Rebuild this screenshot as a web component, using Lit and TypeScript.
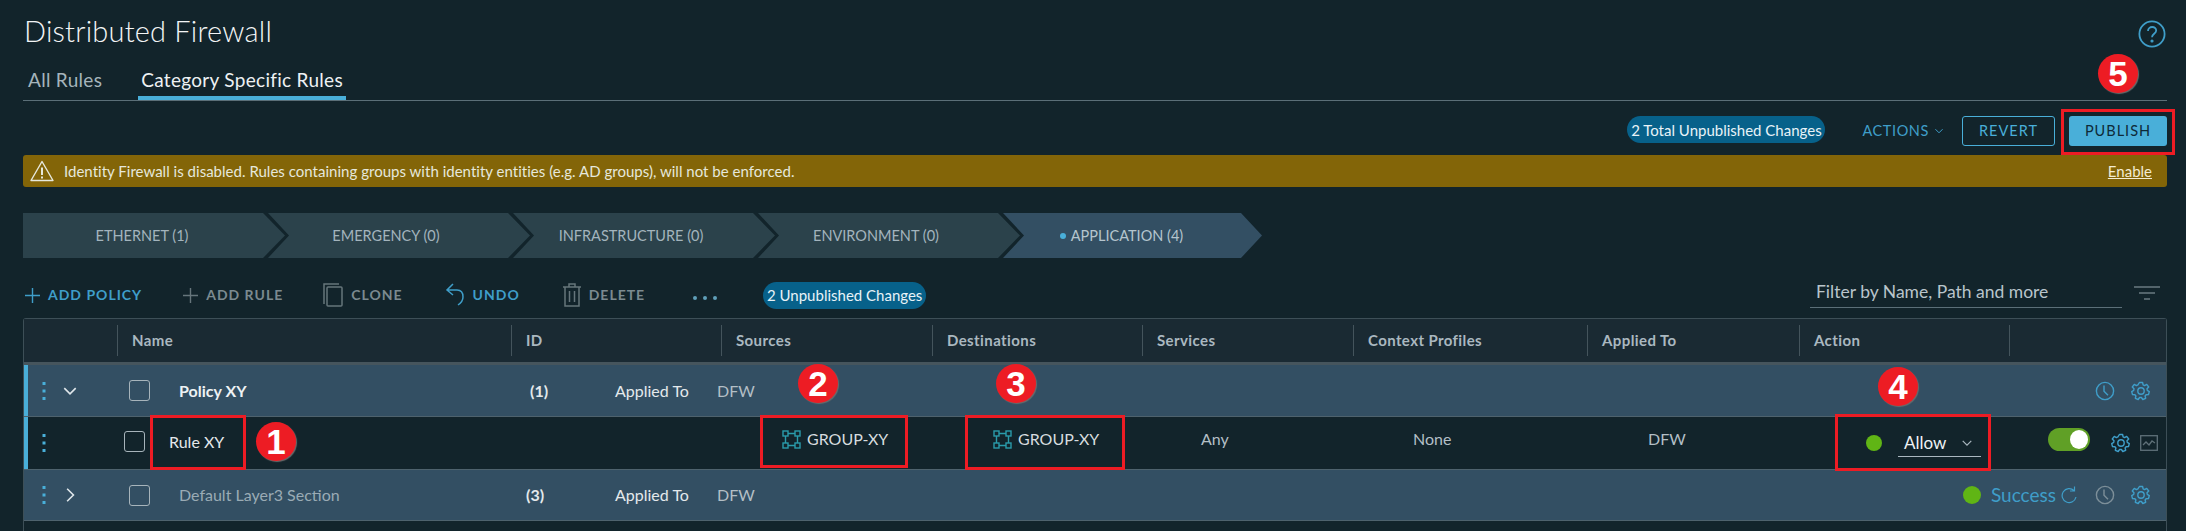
import { LitElement, css, html } from 'lit';
import { customElement } from 'lit/decorators.js';

const BLUE = '#49afd9';

const gear = (color = '#3f9ec9') => html`<svg class="ico" width="20" height="20" viewBox="0 0 20 20" fill="none" stroke=${color} stroke-width="1.4">
  <path d="M8.4 1.5h3.2l.5 2.4 1.5.7 2.1-1.2 2 2.6-1.7 1.8.3 1.6 2 1.2-.8 3-2.4.1-1 1.3.6 2.3-2.9 1.2-1.4-2h-1.8l-1.4 2-2.9-1.2.6-2.3-1-1.3-2.4-.1-.8-3 2-1.2.3-1.6L1.3 6l2-2.6 2.1 1.2 1.5-.7z" stroke-linejoin="round"/>
  <circle cx="10" cy="10" r="3.2"/>
</svg>`;

const clock = (color = '#3f9ec9') => html`<svg class="ico" width="20" height="20" viewBox="0 0 20 20" fill="none" stroke=${color} stroke-width="1.4">
  <circle cx="10" cy="10" r="8.6"/><path d="M9 4.5v5.8l4 4"/>
</svg>`;

const dots = html`<svg class="ico" width="4" height="20" viewBox="0 0 4 20" fill=${BLUE}>
  <rect x="0.5" y="1" width="3" height="3"/><rect x="0.5" y="8.5" width="3" height="3"/><rect x="0.5" y="16" width="3" height="3"/>
</svg>`;

const groupIcon = html`<svg class="ico" width="19" height="19" viewBox="0 0 19 19" fill="none" stroke="#2a9cab" stroke-width="1.4">
  <rect x="1" y="1" width="5" height="5"/><rect x="13" y="1" width="5" height="5"/>
  <rect x="1" y="13" width="5" height="5"/><rect x="13" y="13" width="5" height="5"/>
  <path d="M6 3.5h7M6 15.5h7M3.5 6v7M15.5 6v7"/>
</svg>`;

const chevronDown = (color: string, w = 14) => html`<svg class="ico" width=${w} height=${w} viewBox="0 0 14 14" fill="none" stroke=${color} stroke-width="1.4">
  <path d="M2 4.5l5 5 5-5"/>
</svg>`;

const plus = (color: string) => html`<svg class="ico" width="15" height="15" viewBox="0 0 15 15" stroke=${color} stroke-width="1.4">
  <path d="M7.5 0v15M0 7.5h15"/>
</svg>`;

const segments = [
  { label: 'ETHERNET (1)' },
  { label: 'EMERGENCY (0)' },
  { label: 'INFRASTRUCTURE (0)' },
  { label: 'ENVIRONMENT (0)' },
  { label: 'APPLICATION (4)', active: true },
];

const columns = ['', 'Name', 'ID', 'Sources', 'Destinations', 'Services', 'Context Profiles', 'Applied To', 'Action', ''];

const notes = [
  { n: 1, x: 276, y: 442 },
  { n: 2, x: 818, y: 384 },
  { n: 3, x: 1016, y: 384 },
  { n: 4, x: 1898, y: 387 },
  { n: 5, x: 2118, y: 74 },
];

const boxes = [
  { x: 150, y: 415, w: 96, h: 55 },
  { x: 760, y: 415, w: 148, h: 53 },
  { x: 965, y: 415, w: 160, h: 55 },
  { x: 1835, y: 414, w: 156, h: 57 },
  { x: 2061, y: 109, w: 114, h: 46 },
];

@customElement('app-root')
export class AppRoot extends LitElement {
  static styles = css`
    :host {
      display: block;
      position: relative;
      width: 2186px;
      height: 531px;
      overflow: hidden;
      background: #12242b;
      color: #e4e9ec;
      font: 16px/20px Lato, 'Liberation Sans', sans-serif;
    }
    .ico { display: block; flex: none; }
    .page { padding: 0 19px 0 23px; }

    .head { height: 60px; display: flex; align-items: center; justify-content: space-between; padding-top: 2px; box-sizing: border-box; }
    h1 { margin: 0; padding-left: 1px; font-size: 29px; line-height: 36px; font-weight: 300; color: #f2f5f6; letter-spacing: 0.2px; }
    .help { margin: 6px 1px 0 0; }

    .tabs { height: 40px; display: flex; border-bottom: 1px solid #5b6f78; padding-left: 2px; gap: 33px; }
    .tab { font-size: 19px; line-height: 40px; color: #a5b4bb; padding: 0 3px; height: 40px; box-sizing: border-box; letter-spacing: 0.3px; }
    .tab.on { color: #eef2f4; border-bottom: 4px solid #49afd9; }

    .actions { height: 54px; display: flex; align-items: center; justify-content: flex-end; padding-top: 6px; box-sizing: border-box; }
    .pill { display: inline-flex; flex: none; align-items: center; justify-content: center; background: #07618a; color: #e8f3f8; border-radius: 14px; height: 27px; font-size: 15px; font-weight: 400; letter-spacing: 0; white-space: nowrap; }
    .pill.total { width: 198px; margin-right: 37px; margin-top: -3px; }
    .pill.count { width: 163px; margin-left: 46px; }
    .link { color: #3f9ec9; letter-spacing: 0.6px; font-size: 14.5px; display: flex; align-items: center; gap: 5px; margin-right: 18px; }
    .btn { height: 30px; width: 93px; box-sizing: border-box; display: flex; align-items: center; justify-content: center; border-radius: 3px; font-size: 14.5px; letter-spacing: 1px; }
    .btn.out { border: 1px solid #49afd9; color: #49afd9; margin-right: 14px; }
    .btn.fill { background: #49afd9; color: #0e2a38; width: 98px; }

    .banner { height: 32px; background: #836508; border-radius: 3px; display: flex; align-items: center; padding: 0 15px 0 7px; color: #e6e8dc; font-size: 15px; }
    .banner span { flex: 1; margin-left: 10px; letter-spacing: 0.02px; }
    .banner a { color: #f3ecd2; text-decoration: underline; }

    .steps { display: flex; margin-top: 26px; height: 45px; font-size: 14.5px; }
    .step { width: 262px; margin-right: -17px; height: 45px; flex: none; display: flex; align-items: center; justify-content: center; gap: 5px; box-sizing: border-box; padding-right: 26px; color: #a3b4bd; background: #2b424b; clip-path: polygon(0 0, 240px 0, 262px 50%, 240px 100%, 0 100%, 21px 50%); }
    .step:first-child { clip-path: polygon(0 0, 240px 0, 262px 50%, 240px 100%, 0 100%); padding-right: 24px; }
    .step.on { background: #334f63; color: #b5c5ce; width: 259px; padding-right: 22px; clip-path: polygon(0 0, 238px 0, 259px 50%, 238px 100%, 0 100%, 21px 50%); }
    .bullet { width: 6px; height: 6px; border-radius: 50%; background: #49afd9; }

    .tools { height: 60px; display: flex; align-items: center; color: #7b8a90; font-weight: 700; letter-spacing: 1px; font-size: 14px; padding-top: 14px; box-sizing: border-box; }
    .tool { display: flex; align-items: center; gap: 8px; }
    .tool.on { color: #3f9ec9; }
    .more { display: flex; gap: 6px; margin: 6px 0 0 48px; }
    .more i { width: 4px; height: 4px; background: #5f9fb9; border-radius: 50%; }
    .filter { margin-left: auto; display: flex; align-items: center; }
    .field { width: 312px; height: 33px; margin-bottom: 8px; box-sizing: border-box; padding: 3px 0 0 6px; border-bottom: 1px solid #5b6f78; color: #b9c5cb; font-size: 17.5px; font-weight: 400; letter-spacing: 0; line-height: 28px; }
    .filter svg { margin: 0 7px 5px 12px; }

    .table { border: 1px solid #3d4f57; border-bottom: 0; border-radius: 3px 3px 0 0; height: 213px; box-sizing: border-box; }
    .grid { display: grid; grid-template-columns: 93px 394px 210px 211px 210px 211px 234px 212px 210px 1fr; }
    .thead { height: 43px; background: #1a2a33; border-bottom: 3px solid #46555d; align-items: center; color: #aab8c0; font-weight: 700; font-size: 15px; letter-spacing: 0.4px; }
    .th { height: 31px; line-height: 31px; padding-left: 14px; border-left: 1px solid #44545c; }
    .th:first-child { border-left: 0; }
    .row { height: 51px; align-items: center; border-bottom: 1px solid #4e626d; }
    .row.policy { background: #334f63; }
    .row.marked { box-shadow: inset 4px 0 0 #49afd9; }
    .row.rule { height: 52px; }
    .row.last { height: 50px; }
    .row > div { display: flex; align-items: center; min-width: 0; }
    .handle { padding-left: 18px; gap: 16px; }
    .check { width: 19px; height: 19px; border: 1px solid #a7b4bb; border-radius: 3px; flex: none; }
    .name { padding-left: 12px; gap: 29px; }
    .rule .name { padding: 0 0 3px 7px; gap: 24px; }
    .strong { font-weight: 700; color: #eef2f4; }
    .dim { color: #9aabb5; }
    .idcell { width: 104px; flex: none; box-sizing: border-box; font-weight: 700; }
    .applied { width: 102px; flex: none; }
    .dfw { color: #b3bfc6; }
    .group { padding: 0 0 8px 61px; gap: 6px; color: #d6dcdf; }
    .plain { color: #b3bfc6; padding-bottom: 8px; }
    .dot { width: 16px; height: 16px; border-radius: 50%; background: #60b515; flex: none; }
    .select { margin-left: 16px; width: 83px; height: 27px; border-bottom: 1px solid #aab8c0; display: flex; align-items: center; justify-content: space-between; padding: 0 8px 0 6px; box-sizing: border-box; font-size: 17px; color: #eef2f4; }
    .toggle { width: 42px; height: 23px; margin-bottom: 7px; border-radius: 12px; background: #60a026; position: relative; flex: none; }
    .toggle::after { content: ''; position: absolute; right: 2px; top: 2px; width: 18px; height: 19px; border-radius: 50%; background: #fff; }
    .end { justify-content: flex-end; padding-right: 15px; grid-column: 8 / -1; }
    .spacer { width: 16px; }
    .success { color: #3f9ec9; font-size: 19px; margin-left: 10px; }

    .box { position: absolute; border: 3px solid #ed1c24; box-sizing: border-box; }
    .badge { position: absolute; width: 40px; height: 39px; margin: -20px 0 0 -20px; border-radius: 50%; background: #ed1c24; color: #fff; font: 700 35px/39px 'Liberation Sans', sans-serif; text-align: center; box-shadow: 1px 1px 1px #6c6c6c; }
  `;

  private policyRow(name: string, id: string, cls: string, open: boolean, end: unknown) {
    return html`<div class="row grid policy ${open ? 'marked' : 'last'}">
      <div class="handle">${dots}${open
        ? chevronDown('#dfe6ea', 16)
        : html`<svg class="ico" width="16" height="16" viewBox="0 0 14 14" fill="none" stroke="#dfe6ea" stroke-width="1.4"><path d="M4.5 1.5l5.5 5.5-5.5 5.5"/></svg>`}</div>
      <div class="name"><span class="check"></span><span class=${cls}>${name}</span></div>
      <div style="grid-column: 3 / 5">
        <div class="idcell" style="padding-left: ${open ? 19 : 15}px">${id}</div>
        <div class="applied">Applied To</div>
        <div class="dfw">DFW</div>
      </div>
      ${end}
    </div>`;
  }

  render() {
    return html`<div class="page">
        <div class="head">
          <h1>Distributed Firewall</h1>
          <svg class="ico help" width="28" height="28" viewBox="0 0 28 28" fill="none" stroke="#3f9ec9" stroke-width="1.8">
            <circle cx="14" cy="14" r="12.6"/><path d="M10 11c0-2.5 2-4 4.2-4s4 1.5 4 3.6c0 3.2-4.2 3.2-4.2 6.6"/>
            <circle cx="14" cy="21" r="0.7" fill="#3f9ec9"/>
          </svg>
        </div>
        <div class="tabs">
          <div class="tab">All Rules</div>
          <div class="tab on">Category Specific Rules</div>
        </div>
        <div class="actions">
          <span class="pill total">2 Total Unpublished Changes</span>
          <span class="link">ACTIONS ${chevronDown('#3f9ec9', 10)}</span>
          <span class="btn out">REVERT</span>
          <span class="btn fill">PUBLISH</span>
        </div>
        <div class="banner">
          <svg class="ico" width="24" height="22" viewBox="0 0 24 22" fill="none" stroke="#e6e8dc" stroke-width="1.4">
            <path d="M12 1.5L23 20.5H1z" stroke-linejoin="round"/><path d="M12 7.5v7.5" stroke-width="2"/><path d="M12 16.5v2" stroke-width="2"/>
          </svg>
          <span>Identity Firewall is disabled. Rules containing groups with identity entities (e.g. AD groups), will not be enforced.</span>
          <a>Enable</a>
        </div>
        <div class="steps">
          ${segments.map(
            (s) => html`<div class="step ${s.active ? 'on' : ''}">${s.active ? html`<i class="bullet"></i>` : ''}${s.label}</div>`,
          )}
        </div>
        <div class="tools">
          <span class="tool on" style="margin-left: 2px">${plus('#3f9ec9')}ADD POLICY</span>
          <span class="tool" style="margin-left: 41px">${plus('#66757b')}ADD RULE</span>
          <span class="tool" style="margin-left: 40px">
            <svg class="ico" width="20" height="24" viewBox="0 0 20 24" fill="none" stroke="#66757b" stroke-width="1.5">
              <path d="M1 21V1h15"/><rect x="4" y="4" width="15" height="19" rx="1"/>
            </svg>CLONE</span>
          <span class="tool on" style="margin-left: 42px">
            <svg class="ico" width="20" height="24" viewBox="0 0 20 24" fill="none" stroke="#3f9ec9" stroke-width="1.5">
              <path d="M8 1L2 7l6 5M2 7h10c5 0 6 4 6 7s-2 6-5 8"/>
            </svg>UNDO</span>
          <span class="tool" style="margin-left: 43px">
            <svg class="ico" width="18" height="24" viewBox="0 0 18 24" fill="none" stroke="#66757b" stroke-width="1.5">
              <path d="M0 4h18M6 4V1h6v3M2 4v19h14V4M6.5 8v11M11.5 8v11"/>
            </svg>DELETE</span>
          <span class="more"><i></i><i></i><i></i></span>
          <span class="pill count">2 Unpublished Changes</span>
          <div class="filter">
            <div class="field">Filter by Name, Path and more</div>
            <svg class="ico" width="26" height="14" viewBox="0 0 26 14" stroke="#53646b" stroke-width="2"><path d="M0 1h26M5 7h16M10 13h6"/></svg>
          </div>
        </div>
        <div class="table">
          <div class="thead grid">${columns.map((c) => html`<div class="th">${c}</div>`)}</div>
          ${this.policyRow('Policy XY', '(1)', 'strong', true, html`<div class="end">${clock()}<span class="spacer"></span>${gear()}</div>`)}
          <div class="row rule grid marked">
            <div class="handle">${dots}</div>
            <div class="name"><span class="check"></span><span>Rule XY</span></div>
            <div></div>
            <div class="group">${groupIcon}GROUP-XY</div>
            <div class="group">${groupIcon}GROUP-XY</div>
            <div class="plain" style="padding-left: 59px">Any</div>
            <div class="plain" style="padding-left: 60px">None</div>
            <div class="plain" style="padding-left: 61px">DFW</div>
            <div style="padding-left: 67px"><span class="dot"></span><span class="select">Allow ${chevronDown('#aab8c0', 12)}</span></div>
            <div style="padding-left: 39px; gap: 21px">
              <span class="toggle"></span>${gear()}
              <svg class="ico" style="margin-left: -12px" width="18" height="16" viewBox="0 0 18 16" fill="none" stroke="#5f7078" stroke-width="1.3"><rect x="0.7" y="0.7" width="16.6" height="14.6"/><path d="M3 10l3-3 3 3 3-4 3 2"/></svg>
            </div>
          </div>
          ${this.policyRow('Default Layer3 Section', '(3)', 'dim', false, html`<div class="end">
            <span class="dot" style="width: 18px; height: 18px"></span><span class="success">Success</span>
            <svg class="ico" style="margin: 0 18px 0 5px" width="16" height="18" viewBox="0 0 16 18" fill="none" stroke="#3f9ec9" stroke-width="1.2"><path d="M13 4.5A7 7 0 1 0 15 11M13.5 0.5v4.5H9"/></svg>
            ${clock('#7d8f99')}<span class="spacer"></span>${gear()}
          </div>`)}
        </div>
      </div>
      ${boxes.map((b) => html`<div class="box" style="left:${b.x}px;top:${b.y}px;width:${b.w}px;height:${b.h}px"></div>`)}
      ${notes.map((n) => html`<div class="badge" style="left:${n.x}px;top:${n.y}px">${n.n}</div>`)}`;
  }
}
